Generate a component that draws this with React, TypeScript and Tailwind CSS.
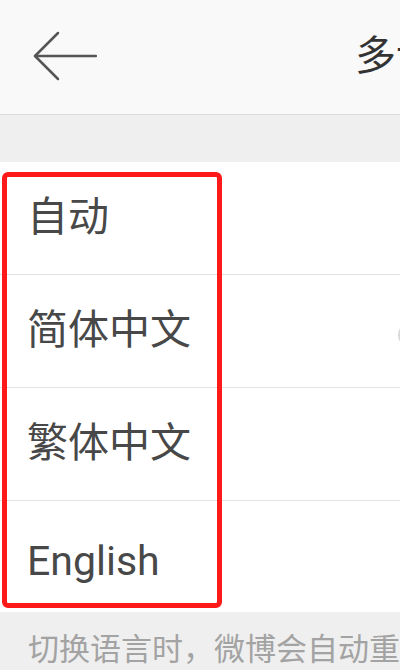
import React from 'react';

const languages = ['自动', '简体中文', '繁体中文'];

const App = () => {
    return (
        <div className="relative w-[400px] h-[670px] overflow-hidden bg-[#efefef] font-['Roboto','Noto_Sans_CJK_SC',sans-serif]">
            {/* Header */}
            <div className="h-[115px] bg-[#f9f9f9] border-b border-[#dddddd] flex items-center pl-[33px] pb-[2px]">
                <svg className="shrink-0" width="64" height="50" viewBox="0 0 64 50" fill="none" stroke="#555555" strokeWidth="2.5" strokeLinecap="round" strokeLinejoin="round">
                    <path d="M63 25H2" />
                    <path d="M25 2L2 25l23 23" />
                </svg>
                <span className="shrink-0 ml-[258px] whitespace-nowrap text-[41px] text-[#333333] leading-none">多语言</span>
            </div>

            {/* Spacer */}
            <div className="h-[47px]" />

            {/* Language list */}
            <div className="bg-white">
                {languages.map((lang, index) => (
                    <div key={index} className="relative h-[113px] border-b border-[#e2e2e2] flex items-center pl-[27px] text-[41px] text-[#484848]">
                        {lang}
                        {index === 1 && (
                            <span className="absolute right-[-22px] top-[48px] w-[24px] h-[24px] rounded-full border-2 border-[#d8d8d8]" />
                        )}
                    </div>
                ))}
                <div className="h-[111px] flex items-center pl-[27px] pt-[10px] text-[41px] text-[#484848]">
                    English
                </div>
            </div>

            {/* Footer note */}
            <div className="pl-[28px] pt-[15px] whitespace-nowrap text-[31px] text-[#a3a3a3]">
                切换语言时，微博会自动重启
            </div>

            {/* Highlight box */}
            <div className="absolute left-[2px] top-[172px] w-[220px] h-[436px] border-[5px] border-[#ff1a1a] rounded-[6px]" />
        </div>
    );
};

export default App;
